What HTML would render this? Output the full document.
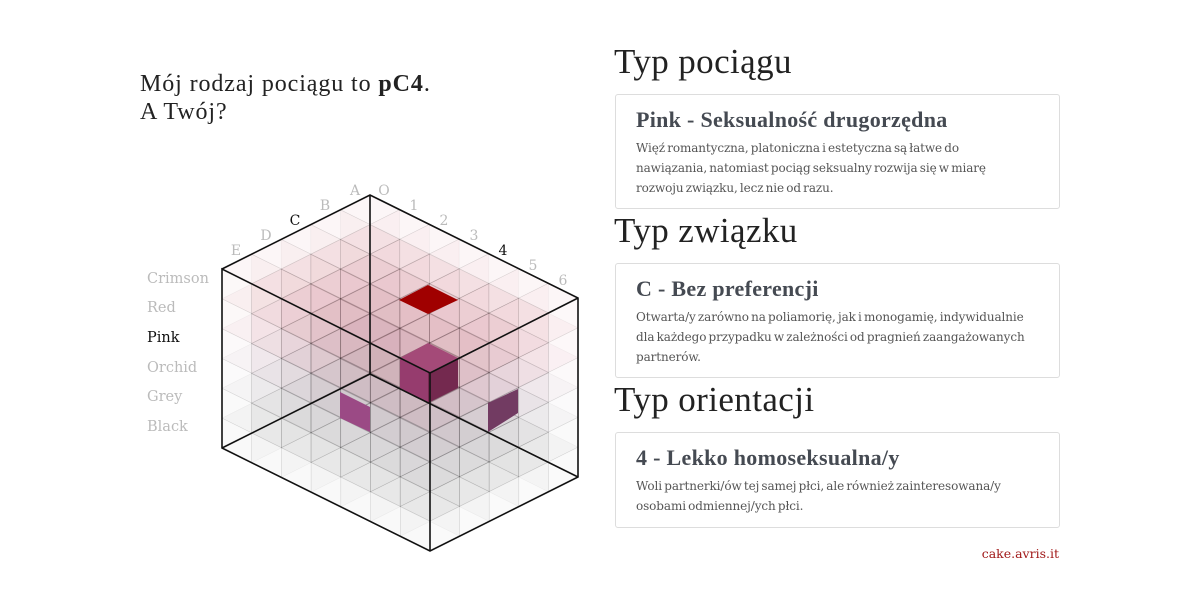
<!DOCTYPE html>
<html><head><meta charset="utf-8">
<style>
html,body{margin:0;padding:0;background:#fff;width:1200px;height:600px;overflow:hidden}
body{position:relative;font-family:"Liberation Serif","DejaVu Serif",serif;color:#222}
.abs{position:absolute;white-space:nowrap}
h1{position:absolute;margin:0;font-weight:normal;font-size:35px;color:#222;left:614px;letter-spacing:0.4px}
.card{position:absolute;left:615px;width:445px;border:1px solid #ddd;border-radius:3px;box-sizing:border-box;padding:12px 20px 0 20px;background:#fff}
.card .t{font-size:22px;font-weight:bold;color:#454a52;margin:0 0 5px 0;letter-spacing:0.3px}
.card .b{font-family:"DejaVu Serif",serif;font-size:12px;line-height:20px;color:#555;letter-spacing:-0.1px;word-spacing:-1.5px;white-space:nowrap}
.lbl{position:absolute;font-family:"DejaVu Serif",serif;font-size:14.5px;color:#bbb}
</style></head><body>
<div class="abs" style="left:140px;top:70px;font-size:24px;line-height:28px;color:#222;letter-spacing:0.9px">Mój rodzaj pociągu to <b>pC4</b>.<br>A Twój?</div>

<div class="lbl" style="left:147px;top:271px">Crimson</div>
<div class="lbl" style="left:147px;top:300px">Red</div>
<div class="lbl" style="left:147px;top:330px;color:#111">Pink</div>
<div class="lbl" style="left:147px;top:360px">Orchid</div>
<div class="lbl" style="left:147px;top:389px">Grey</div>
<div class="lbl" style="left:147px;top:419px">Black</div>

<svg id="cube" width="1200" height="600" style="position:absolute;left:0;top:0">
<g id="vox"></g>
<g font-family="DejaVu Serif, serif" font-size="14" fill="#bbb" text-anchor="middle">
<text x="236" y="255">E</text><text x="266" y="240">D</text><text x="295" y="225" fill="#111">C</text>
<text x="325" y="210">B</text><text x="355" y="195">A</text><text x="384" y="195">O</text>
<text x="414" y="210">1</text><text x="444" y="225">2</text><text x="474" y="240">3</text>
<text x="503" y="255" fill="#111">4</text><text x="533" y="270">5</text><text x="563" y="285">6</text>
</g>
<polygon points="428,285 458,300 428,314 399,300" fill="#a00000"/>
<polygon points="400,358 428,373 428,403 400,388" fill="#963c6e"/>
<polygon points="428,373 458,358 458,388 428,403" fill="#74294f"/>
<polygon points="428,343 458,358 428,373 400,358" fill="#a44a78"/>
<polygon points="340,392 370,407 370,432 340,418" fill="#9b4a85"/>
<polygon points="488,403 518,389 518,413 488,432" fill="#723b62"/>
<g stroke="#111" stroke-width="1.6" fill="none">
<polyline points="222,269 370,195 578,298 578,477 430,551 222,448 222,269 430,373 578,298"/>
<line x1="430" y1="373" x2="430" y2="551"/>
<line x1="370" y1="195" x2="370" y2="374"/>
<line x1="370" y1="374" x2="222" y2="448"/>
<line x1="370" y1="374" x2="578" y2="477"/>
</g>
</svg>

<h1 style="top:42px">Typ pociągu</h1>
<div class="card" style="top:94px;height:115px"><div class="t">Pink - Seksualność drugorzędna</div><div class="b">Więź romantyczna, platoniczna i estetyczna są łatwe do<br>nawiązania, natomiast pociąg seksualny rozwija się w miarę<br>rozwoju związku, lecz nie od razu.</div></div>
<h1 style="top:211px">Typ związku</h1>
<div class="card" style="top:263px;height:115px"><div class="t">C - Bez preferencji</div><div class="b">Otwarta/y zarówno na poliamorię, jak i monogamię, indywidualnie<br>dla każdego przypadku w zależności od pragnień zaangażowanych<br>partnerów.</div></div>
<h1 style="top:380px">Typ orientacji</h1>
<div class="card" style="top:432px;height:96px"><div class="t">4 - Lekko homoseksualna/y</div><div class="b">Woli partnerki/ów tej samej płci, ale również zainteresowana/y<br>osobami odmiennej/ych płci.</div></div>

<div class="abs" style="right:141px;top:546px;font-family:'DejaVu Serif',serif;font-size:12.5px;color:#a01818">cake.avris.it</div>

<script>
(function(){
var g=document.getElementById('vox');
function P(i,j,k){return [370+29.71*i-29.6*j,195+14.71*i+14.8*j+29.83*k];}
var cols=['#c45262','#c45868','#bc6a84','#a4869a','#8a8a8a','#747474'];
var s='';
function poly(pts,c,o){s+='<polygon points="'+pts.map(function(p){return p[0].toFixed(1)+','+p[1].toFixed(1)}).join(' ')+'" fill="'+c+'" fill-opacity="'+o+'" stroke="#000" stroke-opacity="0.05" stroke-width="0.6"/>';}
for(var k=5;k>=0;k--)for(var i=0;i<7;i++)for(var j=0;j<5;j++){
 var c=cols[k];
 poly([P(i,j,k),P(i+1,j,k),P(i+1,j+1,k),P(i,j+1,k)],c,0.05);
 poly([P(i,j+1,k),P(i+1,j+1,k),P(i+1,j+1,k+1),P(i,j+1,k+1)],c,0.045);
 poly([P(i+1,j,k),P(i+1,j+1,k),P(i+1,j+1,k+1),P(i+1,j,k+1)],c,0.04);
}
g.innerHTML=s;
})();
</script>
</body></html>
